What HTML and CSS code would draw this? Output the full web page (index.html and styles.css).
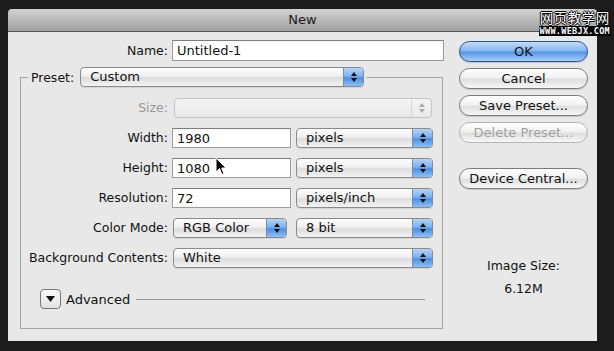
FILE: index.html
```html
<!DOCTYPE html>
<html>
<head>
    <title>New</title>
    <link rel="stylesheet" href="styles.css">
</head>
<body>
    <div class="dialog">
        <div class="titlebar">New</div>
        <div class="mark">
            <div class="mark-cn">网页教学网</div>
            <div class="mark-url">WWW.WEBJX.COM</div>
        </div>
        <div class="panel">
            <div class="left">
                <div class="name-row">
                    <label class="lbl">Name:</label>
                    <div class="field name-field">Untitled-1</div>
                </div>

                <fieldset class="group">
                    <legend class="legend">
                        <span class="legend-lbl">Preset:</span>
                        <div class="popup preset"><span class="val">Custom</span><span class="arrows"><svg width="8" height="12" viewBox="0 0 8 12"><path d="M4 1L7 5H1Z M4 11L7 7H1Z" fill="#111"/></svg></span></div>
                    </legend>

                    <div class="grid">
                        <label class="lbl dim">Size:</label>
                        <div class="popup wide disabled"><span class="val"></span><span class="arrows"><svg width="8" height="12" viewBox="0 0 8 12"><path d="M4 1L7 5H1Z M4 11L7 7H1Z" fill="#aaa"/></svg></span></div>

                        <label class="lbl">Width:</label>
                        <div class="field">1980</div>
                        <div class="popup unit"><span class="val">pixels</span><span class="arrows"><svg width="8" height="12" viewBox="0 0 8 12"><path d="M4 1L7 5H1Z M4 11L7 7H1Z" fill="#111"/></svg></span></div>

                        <label class="lbl">Height:</label>
                        <div class="field">1080</div>
                        <div class="popup unit"><span class="val">pixels</span><span class="arrows"><svg width="8" height="12" viewBox="0 0 8 12"><path d="M4 1L7 5H1Z M4 11L7 7H1Z" fill="#111"/></svg></span></div>

                        <label class="lbl">Resolution:</label>
                        <div class="field">72</div>
                        <div class="popup unit"><span class="val">pixels/inch</span><span class="arrows"><svg width="8" height="12" viewBox="0 0 8 12"><path d="M4 1L7 5H1Z M4 11L7 7H1Z" fill="#111"/></svg></span></div>

                        <label class="lbl">Color Mode:</label>
                        <div class="popup mode"><span class="val">RGB Color</span><span class="arrows"><svg width="8" height="12" viewBox="0 0 8 12"><path d="M4 1L7 5H1Z M4 11L7 7H1Z" fill="#111"/></svg></span></div>
                        <div class="popup unit"><span class="val">8 bit</span><span class="arrows"><svg width="8" height="12" viewBox="0 0 8 12"><path d="M4 1L7 5H1Z M4 11L7 7H1Z" fill="#111"/></svg></span></div>

                        <label class="lbl">Background Contents:</label>
                        <div class="popup wide"><span class="val">White</span><span class="arrows"><svg width="8" height="12" viewBox="0 0 8 12"><path d="M4 1L7 5H1Z M4 11L7 7H1Z" fill="#111"/></svg></span></div>
                    </div>

                    <div class="advanced">
                        <div class="disclosure"><svg width="9" height="6" viewBox="0 0 9 6"><path d="M0 0H9L4.5 6Z" fill="#111"/></svg></div>
                        <span class="adv-lbl">Advanced</span>
                        <div class="rule"></div>
                    </div>
                </fieldset>
            </div>

            <div class="right">
                <div class="btn default">OK</div>
                <div class="btn">Cancel</div>
                <div class="btn">Save Preset...</div>
                <div class="btn off">Delete Preset...</div>
                <div class="btn device">Device Central...</div>
                <div class="info">
                    <div>Image Size:</div>
                    <div class="info-val">6.12M</div>
                </div>
            </div>
        </div>
        <svg class="cursor" width="12" height="19" viewBox="0 0 12 19"><path d="M1 1V15L4.5 11.5L7 17.5L9 16.6L6.6 11H11Z" fill="#000" stroke="#fff" stroke-width="1"/></svg>
    </div>
</body>
</html>
```

FILE: styles.css
```css
body { margin: 0; background: #1c1c1c; font-family: "DejaVu Sans", Arial, sans-serif; font-size: 12.5px; color: #111; }
.dialog { position: relative; width: 589px; margin: 9px 0 0 8px; }
.titlebar { height: 22px; line-height: 22px; text-align: center; font-size: 13px; color: #1a1a1a; background: linear-gradient(#d2d2d2, #a0a0a0); border-bottom: 1px solid #555; border-radius: 4px 4px 0 0; }
.panel { display: flex; height: 309px; padding: 8px 9px 0 12px; box-sizing: border-box; background: #e8e8e8; }
.left { width: 424px; }
.right { width: 129px; margin-left: 15px; display: flex; flex-direction: column; padding-top: 1px; }

.lbl { text-align: right; line-height: 20px; white-space: nowrap; }
.dim { color: #999; }
.name-row { display: grid; grid-template-columns: 148px 272px; column-gap: 4px; align-items: center; }
.field { height: 20px; line-height: 20px; padding-left: 4px; background: #fff; border: 1px solid #9c9c9c; border-top-color: #7c7c7c; box-sizing: border-box; font-size: 13px; }
.name-field { height: 21px; }

.group { margin: 6px 0 0; padding: 0 0 19px; border: 1px solid #a4a4a4; width: 423px; box-sizing: border-box; }
.legend { display: flex; align-items: center; margin-left: 7px; padding: 0 2px 0 3px; }
.legend-lbl { margin-right: 6px; }
.grid { display: grid; grid-template-columns: 147px 119px 138px; column-gap: 4px; row-gap: 10px; margin-top: 11px; }
.grid .popup.unit { margin-left: 1px; }
.grid .wide { grid-column: 2 / 4; margin-left: 1px; }
.grid .disabled { margin-left: 2px; margin-right: 1px; }
.grid .mode { margin-left: 1px; margin-right: 4px; }

.popup { display: flex; height: 20px; box-sizing: border-box; border: 1px solid #8a8a8a; border-radius: 4px; background: linear-gradient(#fdfdfd, #f0f0f0 45%, #dcdcdc 55%, #f3f3f3); overflow: hidden; box-shadow: 0 1px 0 rgba(0,0,0,0.08); }
.popup .val { flex: 1; line-height: 18px; padding-left: 9px; font-size: 13px; }
.popup .arrows { width: 19px; display: flex; align-items: center; justify-content: center; border-left: 1px solid #6d8fc0; background: linear-gradient(#b5d3f5, #7fb1ee 45%, #4f8fe0 55%, #8cc0f6); }
.preset { width: 284px; }
.disabled { border-color: #c4c4c4; background: linear-gradient(#f4f4f4, #eaeaea); box-shadow: none; }
.disabled .arrows { background: none; border-left-color: #d6d6d6; }

.advanced { display: flex; align-items: center; margin-top: 21px; padding-left: 19px; }
.disclosure { width: 21px; height: 20px; box-sizing: border-box; border: 1px solid #777; border-radius: 4px; background: linear-gradient(#fafafa, #e2e2e2); display: flex; align-items: center; justify-content: center; }
.adv-lbl { margin-left: 5px; font-size: 13px; }
.rule { flex: 1; border-top: 1px solid #9a9a9a; margin: 1px 17px 0 6px; }

.btn { height: 21px; line-height: 19px; box-sizing: border-box; text-align: center; font-size: 13px; border: 1px solid #7a7a7a; border-radius: 11px; background: linear-gradient(#ffffff, #f2f2f2 45%, #dfdfdf 55%, #f7f7f7); margin-bottom: 6px; box-shadow: 0 1px 1px rgba(0,0,0,0.15); }
.btn.default { border-color: #2b4f8e; background: linear-gradient(#c4dcf7, #86b6ef 45%, #5896e4 55%, #a6d0fa); }
.btn.off { color: #a0a0a0; border-color: #b4b4b4; box-shadow: none; }
.btn.device { margin-top: 19px; }
.info { text-align: center; margin-top: 59px; line-height: 23px; }

.mark { position: absolute; right: -14px; top: 1px; text-align: center; color: #fff; }
.mark-cn { font-family: "Noto Sans CJK SC", sans-serif; font-size: 13.5px; line-height: 14px; letter-spacing: 0.5px; text-shadow: 1px 0 #000, -1px 0 #000, 0 1px #000, 0 -1px #000; }
.mark-url { margin-top: 2px; font-family: "DejaVu Sans Mono", monospace; font-weight: bold; font-size: 8.5px; line-height: 10px; letter-spacing: 0.3px; background: #000; padding: 0 1px; }
.cursor { position: absolute; left: 207px; top: 148px; }
```
